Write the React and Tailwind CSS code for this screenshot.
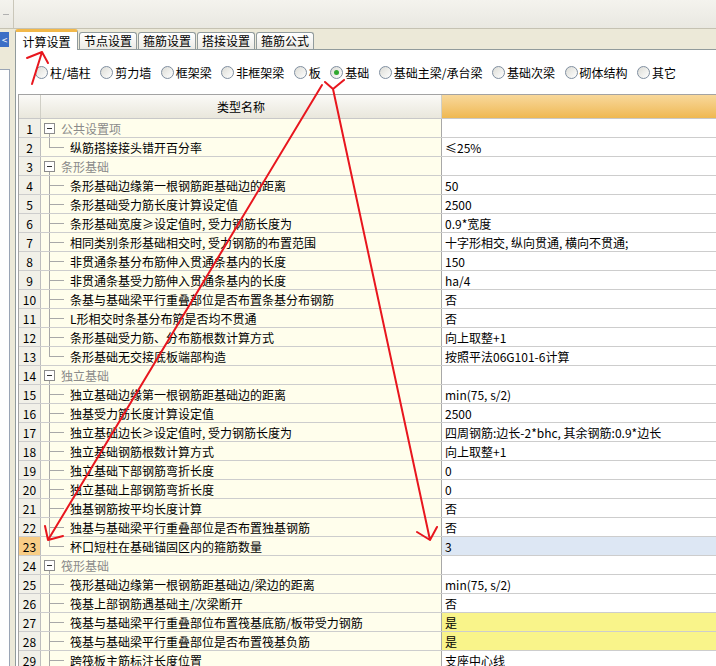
import React from "react";

const rows = [
  { g: "公共设置项" },
  { n: "纵筋搭接接头错开百分率", v: "≤25%" },
  { g: "条形基础" },
  { n: "条形基础边缘第一根钢筋距基础边的距离", v: "50" },
  { n: "条形基础受力筋长度计算设定值", v: "2500" },
  { n: "条形基础宽度≥设定值时, 受力钢筋长度为", v: "0.9*宽度" },
  { n: "相同类别条形基础相交时, 受力钢筋的布置范围", v: "十字形相交, 纵向贯通, 横向不贯通;" },
  { n: "非贯通条基分布筋伸入贯通条基内的长度", v: "150" },
  { n: "非贯通条基受力筋伸入贯通条基内的长度", v: "ha/4" },
  { n: "条基与基础梁平行重叠部位是否布置条基分布钢筋", v: "否" },
  { n: "L形相交时条基分布筋是否均不贯通", v: "否" },
  { n: "条形基础受力筋、分布筋根数计算方式", v: "向上取整+1" },
  { n: "条形基础无交接底板端部构造", v: "按照平法06G101-6计算" },
  { g: "独立基础" },
  { n: "独立基础边缘第一根钢筋距基础边的距离", v: "min(75, s/2)" },
  { n: "独基受力筋长度计算设定值", v: "2500" },
  { n: "独立基础边长≥设定值时, 受力钢筋长度为", v: "四周钢筋:边长-2*bhc, 其余钢筋:0.9*边长" },
  { n: "独立基础钢筋根数计算方式", v: "向上取整+1" },
  { n: "独立基础下部钢筋弯折长度", v: "0" },
  { n: "独立基础上部钢筋弯折长度", v: "0" },
  { n: "独基钢筋按平均长度计算", v: "否" },
  { n: "独基与基础梁平行重叠部位是否布置独基钢筋", v: "否" },
  { n: "杯口短柱在基础锚固区内的箍筋数量", v: "3", sel: true },
  { g: "筏形基础" },
  { n: "筏形基础边缘第一根钢筋距基础边/梁边的距离", v: "min(75, s/2)" },
  { n: "筏基上部钢筋遇基础主/次梁断开", v: "否" },
  { n: "筏基与基础梁平行重叠部位布置筏基底筋/板带受力钢筋", v: "是", hi: true },
  { n: "筏基与基础梁平行重叠部位是否布置筏基负筋", v: "是", hi: true },
  { n: "跨筏板主筋标注长度位置", v: "支座中心线" },
];

const tabs = ["计算设置", "节点设置", "箍筋设置", "搭接设置", "箍筋公式"];
const radios = ["柱/墙柱", "剪力墙", "框架梁", "非框架梁", "板", "基础", "基础主梁/承台梁", "基础次梁", "砌体结构", "其它"];

const Radio = ({ label, checked }) => (
  <div className="flex items-center gap-[2px]">
    <span className="w-[13px] h-[13px] rounded-full border border-[#7f8ea0] bg-gradient-to-br from-[#dcdcd6] to-white flex items-center justify-center">
      {checked && <span className="w-[5px] h-[5px] rounded-full bg-[#2fa82f]" />}
    </span>
    <span>{label}</span>
  </div>
);

const App = () => {
  return (
    <div className="relative w-[716px] h-[666px] overflow-hidden bg-[#ece9d8] text-[12px] leading-[19px] text-black font-['Noto_Sans_CJK_SC',sans-serif]">
      {/* top toolbar */}
      <div className="h-[29px] flex border-b border-[#c5c2b2] bg-gradient-to-b from-[#f4f3ee] to-[#e9e8e1]">
        <div className="w-[14px] border-r border-[#cac7ba] flex items-center">
          <span className="ml-[3px] w-[6px] h-px bg-[#b0b0b0]" />
        </div>
      </div>

      <div className="flex h-[637px]">
        {/* left dock strip */}
        <div className="w-[10px] flex flex-col">
          <div className="mt-[3px] h-[15px] w-[9px] bg-[#3c6fc6] text-white text-[10px] leading-[15px] flex items-center justify-center">&lt;</div>
          <div className="h-[22px]" />
          <div className="flex-1 w-[10px] bg-white border-t border-r border-[#9aa5b5]" />
        </div>

        <div className="ml-[5px] flex-1 flex flex-col">
          {/* tabs */}
          <div className="h-[20px] flex items-end">
            {tabs.map((t, i) =>
              i === 0 ? (
                <div key={t} className="relative z-10 -mb-px h-[21px] w-[63px] bg-white border-x border-[#919b9c] border-t-[3px] border-t-[#f2b84a] rounded-t-[3px] flex items-center justify-center">
                  {t}
                </div>
              ) : (
                <div key={t} className="h-[17px] ml-[1px] px-[4px] border border-b-0 border-[#919b9c] rounded-t-[3px] bg-gradient-to-b from-white to-[#ecebe5] flex items-center leading-[16px]">
                  {t}
                </div>
              )
            )}
          </div>

          {/* panel */}
          <div className="flex-1 bg-white border-l border-t border-[#919b9c]">
            <div className="h-[44px] flex items-center gap-[9.5px] pl-[19px]">
              {radios.map((r) => (
                <Radio key={r} label={r} checked={r === "基础"} />
              ))}
            </div>

            {/* property grid */}
            <div className="ml-[2px] border-t border-l border-[#a3a3a3]">
              <div className="flex h-[24px] border-b border-[#c8c8c8]">
                <div className="w-[22px] border-r border-[#d0cfc6] bg-gradient-to-b from-[#fbfaf7] to-[#e9e7dc]" />
                <div className="w-[401px] border-r border-[#d0cfc6] bg-gradient-to-b from-[#fbfaf7] to-[#e9e7dc] flex items-center justify-center">
                  类型名称
                </div>
                <div className="flex-1 bg-gradient-to-b from-[#f8d89a] to-[#efb850]" />
              </div>

              {rows.map((r, i) => {
                const next = rows[i + 1];
                const last = !r.g && next && next.g;
                return (
                  <div key={i} className="flex h-[19px] border-b border-[#cdcdcd]">
                    <div className={`w-[22px] border-r border-[#bdbdbd] text-center ${r.sel ? "bg-[#f8cd86]" : "bg-[#f1f0e8]"}`}>
                      {i + 1}
                    </div>
                    <div className="w-[401px] border-r border-[#a8a8a8] bg-[#fffeec] flex items-center">
                      {r.g ? (
                        <>
                          <div className="ml-[3px] w-[11px] self-stretch flex flex-col items-center">
                            <div className="flex-1" />
                            <div className="w-[11px] h-[11px] border border-[#8c8c8c] bg-white flex items-center justify-center">
                              <span className="w-[5px] h-px bg-[#333]" />
                            </div>
                            <div className="flex-1 w-px bg-[#a8a8a8]" />
                          </div>
                          <span className="ml-[6px] text-[#8a8a8a]">{r.g}</span>
                        </>
                      ) : (
                        <>
                          <div className="ml-[8px] w-[15px] self-stretch flex flex-col">
                            <div className="flex-1 border-l border-b border-[#a8a8a8]" />
                            <div className={`flex-1 ${last ? "" : "border-l border-[#a8a8a8]"}`} />
                          </div>
                          <span className="ml-[6px] whitespace-nowrap">{r.n}</span>
                        </>
                      )}
                    </div>
                    <div
                      className={`flex-1 pl-[3px] whitespace-nowrap ${
                        r.sel ? "bg-[#dde7f4]" : r.hi ? "bg-[#f9f48a]" : "bg-white"
                      }`}
                    >
                      {r.v}
                    </div>
                  </div>
                );
              })}
            </div>
          </div>
        </div>
      </div>

      {/* red hand-drawn annotations */}
      <svg className="absolute inset-0 pointer-events-none" width="716" height="666" viewBox="0 0 716 666">
        <g fill="none" stroke="#e8161e" strokeWidth="2" strokeLinecap="round" strokeLinejoin="round">
          <path d="M32 84 L42 52 M27 58 L42 52 L48 63" />
          <path d="M322 85 L48 540 M45 526 L48 540 L63 536" />
          <path d="M325 82 L333 89 L344 80 M333 89 L430 540 M417 532 L430 540 L437 527" />
        </g>
      </svg>
    </div>
  );
};

export default App;
